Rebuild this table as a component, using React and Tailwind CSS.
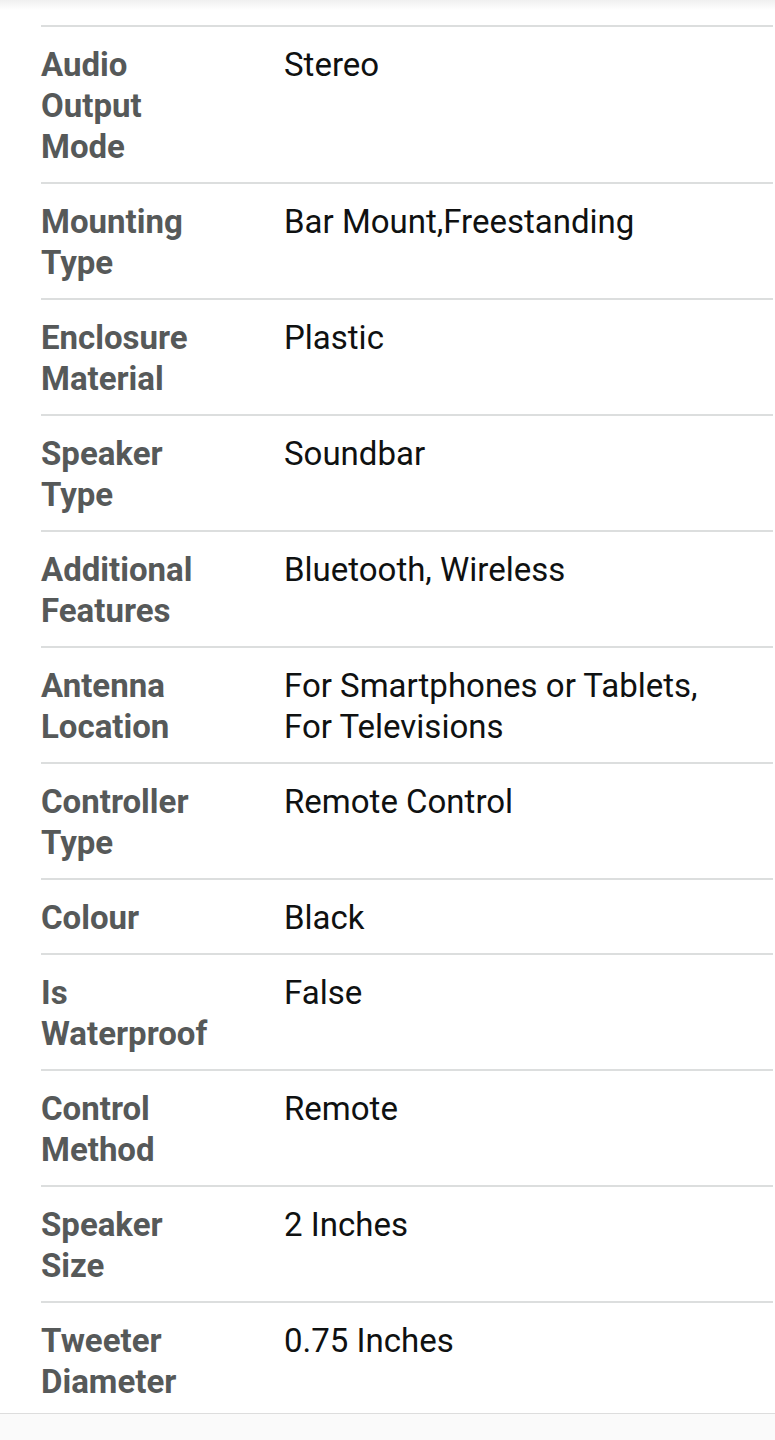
const rows = [
  ["Audio Output Mode", "Stereo"],
  ["Mounting Type", "Bar Mount,Freestanding"],
  ["Enclosure Material", "Plastic"],
  ["Speaker Type", "Soundbar"],
  ["Additional Features", "Bluetooth, Wireless"],
  ["Antenna Location", "For Smartphones or Tablets, For Televisions"],
  ["Controller Type", "Remote Control"],
  ["Colour", "Black"],
  ["Is Waterproof", "False"],
  ["Control Method", "Remote"],
  ["Speaker Size", "2 Inches"],
  ["Tweeter Diameter", "0.75 Inches"],
]

export default function App() {
  return (
    <div className="min-h-[1440px] bg-white font-['Roboto',sans-serif]">
      <div className="h-[10px] bg-gradient-to-b from-[#f0f0f0] to-white" />
      <div className="pt-[15px] pl-[41px] pr-[2px]">
        <div className="border-t-2 border-[#dcdede]">
          {rows.map(([label, value], i) => {
            const last = i === rows.length - 1
            return (
              <div
                key={label}
                className={`flex pt-[17px] text-[33px] leading-[41px] ${last ? "pb-[11px]" : "pb-[15px] border-b-2 border-[#dcdede]"}`}
              >
                <div className="w-[243px] shrink-0 pr-[58px] font-bold text-[#565959]">{label}</div>
                <div className="w-[440px] text-[#0f1111]">{value}</div>
              </div>
            )
          })}
        </div>
      </div>
      <div className="border-t border-[#dddddd] bg-[#fafafa] h-[30px]" />
    </div>
  )
}
